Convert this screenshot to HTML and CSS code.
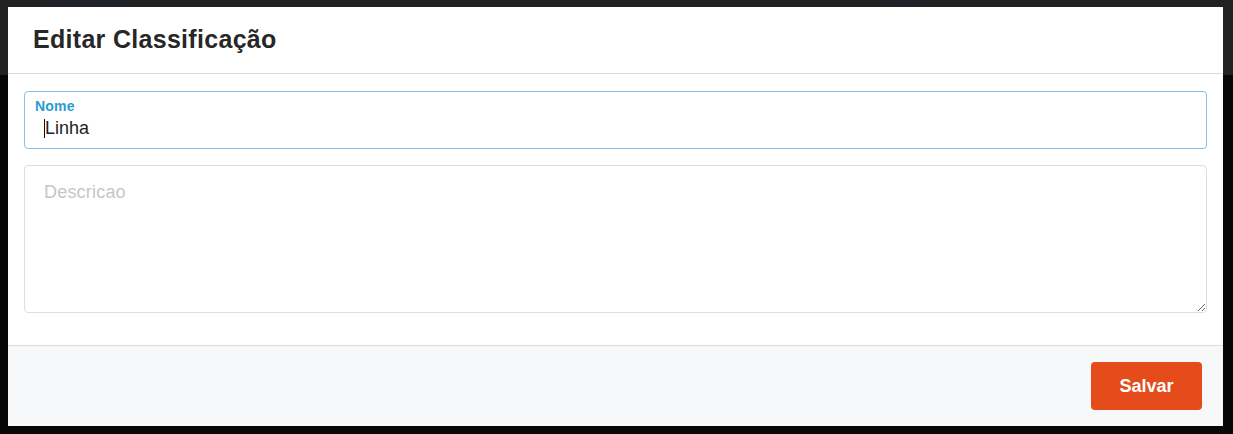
FILE: index.html
```html
<!DOCTYPE html>
<html lang="pt">
<head>
<meta charset="utf-8">
<title>Editar Classificação</title>
<link rel="stylesheet" href="styles.css">
</head>
<body>
<div class="page-behind">
  <span class="behind-label behind-1">Classificação</span>
  <span class="behind-label behind-2">Editar</span>
</div>
<div class="modal">
  <header class="modal-header">
    <h1 class="modal-title">Editar Classificação</h1>
  </header>
  <div class="modal-body">
    <div class="field field-active">
      <label class="field-label" for="nome">Nome</label>
      <div class="input-wrap">
        <span class="caret"></span>
        <input id="nome" class="field-input" type="text" value="Linha">
      </div>
    </div>
    <textarea class="field-textarea" placeholder="Descricao"></textarea>
  </div>
  <footer class="modal-footer">
    <button class="btn-save" type="button">Salvar</button>
  </footer>
</div>
</body>
</html>
```

FILE: styles.css
```css
* { box-sizing: border-box; }

html, body {
  margin: 0;
  height: 100%;
}

body {
  font-family: "Liberation Sans", Arial, sans-serif;
  background: linear-gradient(to bottom, #222222 0, #222222 75px, #070707 75px, #070707 100%);
  position: relative;
  overflow: hidden;
}

.page-behind {
  position: absolute;
  top: -9px;
  left: 0;
  right: 0;
  height: 20px;
  font-size: 14px;
  font-weight: bold;
  color: #1c2430;
}

.behind-label { position: absolute; top: 0; }
.behind-1 { left: 38px; }
.behind-2 { left: 885px; }

.modal {
  position: relative;
  margin: 7px 10px 0 8px;
  background: #ffffff;
  height: 419px;
  display: flex;
  flex-direction: column;
}

.modal-header {
  height: 67px;
  border-bottom: 1px solid #dcdcdc;
  padding: 0 25px;
  display: flex;
  align-items: center;
}

.modal-title {
  margin: 0;
  font-size: 25px;
  font-weight: bold;
  color: #272727;
  letter-spacing: 0.3px;
  position: relative;
  top: -1px;
}

.modal-body {
  padding: 17px 16px 32px 16px;
  display: flex;
  flex-direction: column;
  gap: 16px;
  border-bottom: 1px solid #dcdcdc;
}

.field {
  height: 58px;
  border: 1px solid #8cc0e2;
  border-radius: 4px;
  padding: 6px 10px 0 10px;
  display: flex;
  flex-direction: column;
}

.field-label {
  font-size: 14px;
  font-weight: bold;
  color: #2c9bd4;
  line-height: 16px;
  letter-spacing: 0.2px;
}

.input-wrap {
  position: relative;
  padding-left: 10px;
  margin-top: 2px;
}

.caret {
  position: absolute;
  left: 9px;
  top: 3px;
  width: 1px;
  height: 19px;
  background: #111;
}

.field-input {
  border: none;
  outline: none;
  padding: 0;
  margin: 0;
  width: 100%;
  font-family: "Liberation Sans", Arial, sans-serif;
  font-size: 18px;
  line-height: 24px;
  color: #222;
  background: transparent;
}

.field-textarea {
  display: block;
  height: 148px;
  width: 100%;
  border: 1px solid #dedede;
  border-radius: 4px;
  padding: 15px 19px;
  font-family: "Liberation Sans", Arial, sans-serif;
  font-size: 18px;
  line-height: 22px;
  color: #222;
  resize: vertical;
  outline: none;
}

.field-textarea::placeholder { color: #c6c6c6; letter-spacing: 0.2px; }

.modal-footer {
  flex: 1;
  background: #f7f8fa;
  display: flex;
  justify-content: flex-end;
  align-items: flex-start;
  padding: 16px 21px 16px 16px;
}

.btn-save {
  width: 111px;
  height: 48px;
  border: none;
  border-radius: 4px;
  background: #e64c1b;
  color: #ffffff;
  font-family: "Liberation Sans", Arial, sans-serif;
  font-size: 18px;
  font-weight: bold;
  cursor: pointer;
}
```
